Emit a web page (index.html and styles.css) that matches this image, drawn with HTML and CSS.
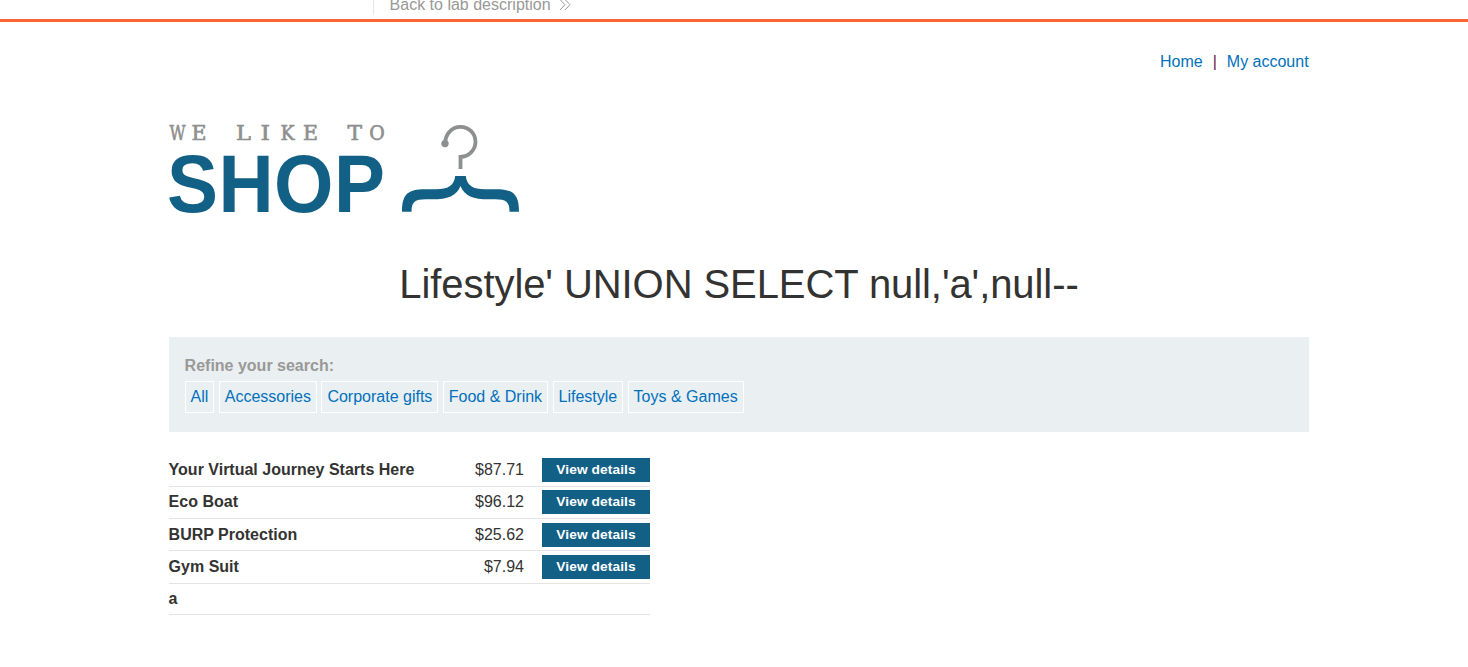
FILE: index.html
```html
<!DOCTYPE html>
<html lang="en">
<head>
<meta charset="utf-8">
<title>We Like To Shop</title>
<link rel="stylesheet" href="styles.css">
</head>
<body>
<header class="lab-header">
  <a class="lab-link" href="#">Back to lab description
    <svg class="chevrons" width="12" height="12" viewBox="0 0 12 12"><path d="M1 .5 6 5.7 1 11M6 .5 11 5.7 6 11"/></svg>
  </a>
</header>
<main class="container">
  <nav class="top-links"><a href="#">Home</a><span>|</span><a href="#">My account</a></nav>
  <svg class="logo" width="352" height="94" viewBox="0 0 352 94" role="img" aria-label="We like to shop">
    <text class="logo-small" y="20"><tspan x="0.500" textLength="16" lengthAdjust="spacingAndGlyphs">W</tspan><tspan x="22.500" textLength="15" lengthAdjust="spacingAndGlyphs">E</tspan> <tspan x="67" textLength="15" lengthAdjust="spacingAndGlyphs">L</tspan><tspan x="91.500" textLength="9.500" lengthAdjust="spacingAndGlyphs">I</tspan><tspan x="111.500">K</tspan><tspan x="134" textLength="15" lengthAdjust="spacingAndGlyphs">E</tspan> <tspan x="178.500" textLength="14.500" lengthAdjust="spacingAndGlyphs">T</tspan><tspan x="200.300">O</tspan></text>
    <text class="logo-big" transform="translate(-2 92) scale(.943 1)">SHOP</text>
    <path class="hook" d="M276.3 23.5C276 14 283 6.800 291.500 6.800A14.900 14.900 0 0 1 291.500 36.800V49"/>
    <circle class="hook-tip" cx="276" cy="23.600" r="3.700"/>
    <path class="bar" d="M286.200 56H296.800C298 66 304 69.200 316 69.200H327C344 69.200 350 74 350 91.700H340.500C340.500 82 337 79.300 326 79.300H320C304 79.300 295.500 76 291.500 66C287.500 76 279 79.300 263 79.300H257C246 79.300 242.500 82 242.500 91.700H233C233 74 239 69.200 256 69.200H267C279 69.200 285 66 286.200 56Z"/>
  </svg>
  <h1 class="title">Lifestyle' UNION SELECT null,'a',null--</h1>
  <section class="filters">
    <strong class="filters-label">Refine your search:</strong>
    <div class="filter-list">
      <a href="#">All</a><a href="#">Accessories</a><a href="#">Corporate gifts</a><a href="#">Food &amp; Drink</a><a href="#">Lifestyle</a><a href="#">Toys &amp; Games</a>
    </div>
  </section>
  <section class="products">
    <div class="row"><b>Your Virtual Journey Starts Here</b><span class="price">$87.71</span><a class="button" href="#">View details</a></div>
    <div class="row"><b>Eco Boat</b><span class="price">$96.12</span><a class="button" href="#">View details</a></div>
    <div class="row"><b>BURP Protection</b><span class="price">$25.62</span><a class="button" href="#">View details</a></div>
    <div class="row"><b>Gym Suit</b><span class="price">$7.94</span><a class="button" href="#">View details</a></div>
    <div class="row last"><b>a</b></div>
  </section>
</main>
</body>
</html>
```
FILE: styles.css
```css
* { box-sizing: border-box; }
body {
  margin: 0;
  height: 667px;
  overflow: hidden;
  background: #fff;
  color: #333332;
  font: 16px/18px "Liberation Sans", Arial, sans-serif;
}
a { color: #0071bc; text-decoration: none; }

.lab-header {
  display: flex;
  align-items: flex-start;
  height: 22px;
  padding-left: 373px;
  border-bottom: 3px solid #ff6633;
}
.lab-link {
  display: flex;
  gap: 8px;
  height: 15px;
  padding-left: 15.600px;
  border-left: 1px solid #e6e6e6;
  color: #999997;
  line-height: 9px;
}
.chevrons { fill: none; stroke: #999997; stroke-width: 1; margin-top: -1px; }

.container { width: 1140px; margin-left: 169px; }
.top-links {
  display: flex;
  justify-content: flex-end;
  gap: 10px;
  padding: 31px 0.400px 0 0;
  color: #6a2045;
}
.logo { display: block; margin-top: 49px; overflow: visible; }
.logo-small {
  font: 21px "DejaVu Serif", serif;
  font-stretch: condensed;
  fill: #8e8f8f;
  stroke: #8e8f8f;
  stroke-width: .6;
}
.logo-big {
  font: bold 81px "Liberation Sans", Arial, sans-serif;
  letter-spacing: .5px;
  fill: #126085;
}
.hook { fill: none; stroke: #8e8f91; stroke-width: 3.800; }
.hook-tip { fill: #8e8f91; }
.bar { fill: #126085; }

.title {
  margin: 47px 0 0;
  text-align: center;
  font-size: 40px;
  font-weight: 400;
  letter-spacing: -.08px;
  line-height: 46px;
}
.filters {
  height: 95px;
  margin-top: 30px;
  padding: 20px 15.600px 0;
  background: #eaeff2;
}
.filters-label { display: block; color: #999997; }
.filter-list { display: flex; gap: 4.400px; margin-top: 6px; }
.filter-list a {
  height: 32px;
  padding: 6px 5px 0;
  border: 1px solid #fff;
}
.products { width: 481px; padding-top: 22.500px; }
.row {
  display: grid;
  grid-template-columns: 255px 100px 108px;
  column-gap: 9px;
  align-items: center;
  height: 32.300px;
  border-bottom: 1px solid #e4e4e4;
}
.row.last { height: 31px; }
.row b { margin-left: -.400px; }
.price { padding-right: 9px; text-align: right; }
.button {
  height: 24px;
  background: #126085;
  color: #fff;
  font-size: 13.700px;
  font-weight: 700;
  letter-spacing: .12px;
  line-height: 24px;
  text-align: center;
}
```
